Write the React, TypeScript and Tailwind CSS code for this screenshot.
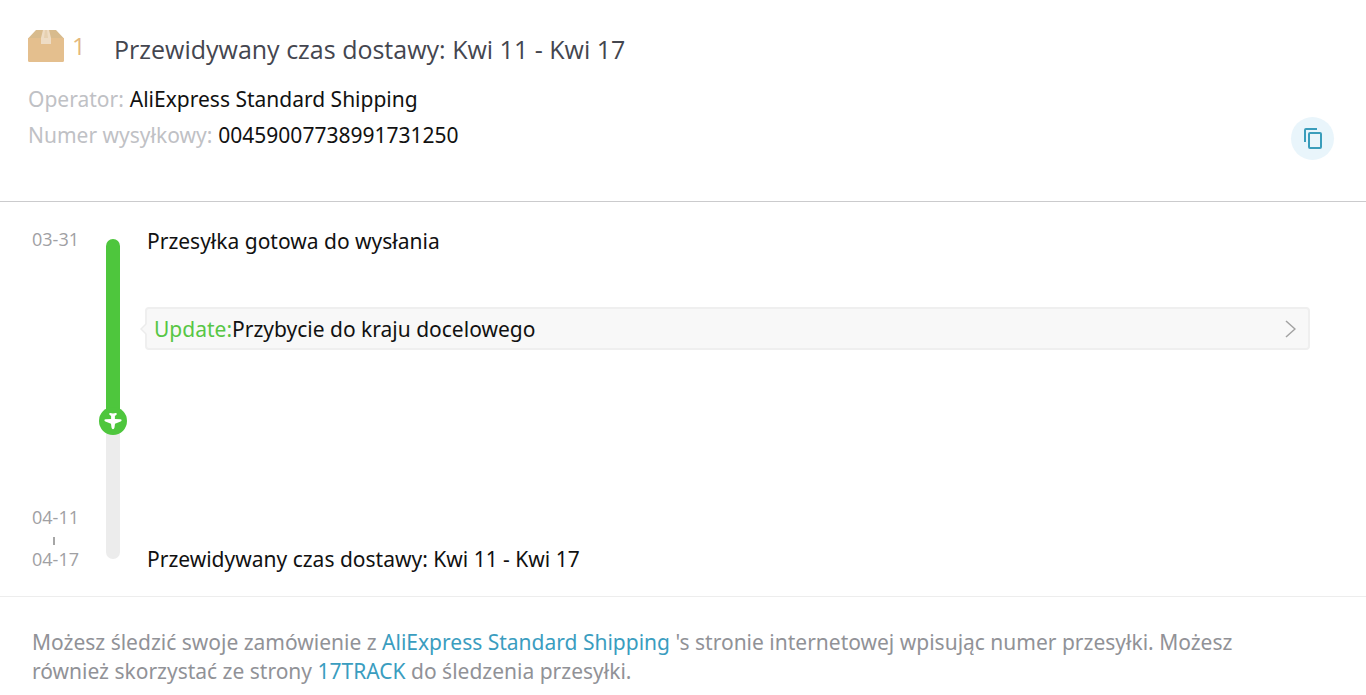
import type { ReactNode } from "react";

function PackageIcon() {
  return (
    <svg width="36" height="32" viewBox="0 0 36 32" aria-hidden="true">
      <path d="M8 0h20l8 8.500H0z" fill="#d8bb8d" />
      <path d="M0 8h36v22.500a1.500 1.500 0 0 1-1.500 1.500h-33a1.500 1.500 0 0 1-1.500-1.500z" fill="#e4bf8e" />
      <path d="M15 0h6l2 8v6H13V8z" fill="#eedcc4" />
      <path d="M17 0h2l1 8h-4z" fill="#e6d0b0" />
    </svg>
  );
}

function CopyIcon() {
  return (
    <svg width="18" height="21" viewBox="0 0 18 21" fill="none" stroke="#3a9dbb" strokeWidth="2" aria-hidden="true">
      <path d="M1 14V2a1 1 0 0 1 1-1h11" />
      <rect x="5" y="5" width="12" height="15" rx="1" />
    </svg>
  );
}

function PlaneIcon() {
  return (
    <svg width="18" height="18" viewBox="0 0 18 18" fill="#fff" aria-hidden="true">
      <path d="M5.200 1.800Q5.300.9 6.300 1L9 1.600 11.700 1Q12.700.9 12.800 1.800 12.800 2.600 12.200 3L10.900 4V7L16.500 7.300Q17.600 7.500 17.600 8.300 17.600 9.200 16.600 9.500L11 11.700 10.500 15.600Q10.200 17.300 9 17.300 7.800 17.300 7.500 15.600L7 11.700 1.400 9.500Q.4 9.200.4 8.300.4 7.500 1.500 7.300L7.100 7V4L5.800 3Q5.200 2.600 5.200 1.800z" />
    </svg>
  );
}

function Detail({ label, children }: { label: string; children: ReactNode }) {
  return (
    <div className="flex gap-1.5">
      <dt className="text-[#bfc1c5]">{label}</dt>
      <dd>{children}</dd>
    </div>
  );
}

export default function App() {
  return (
    <main className="bg-white font-['Noto_Sans',sans-serif] text-[21px] leading-9 text-[#111]">
      <header className="border-b border-[#cbcbcd] px-7 pt-7 pb-12">
        <div className="flex items-start font-['Open_Sans',sans-serif]">
          <div className="flex w-[86px] items-start gap-2 pt-0.5 text-[#e4b87c]">
            <PackageIcon />
            <span className="text-2xl/8">1</span>
          </div>
          <h1 className="pt-[3px] text-[25px] text-[#44464f]">Przewidywany czas dostawy: Kwi 11 - Kwi 17</h1>
        </div>
        <div className="mt-3.5 flex items-end justify-between pr-1">
          <dl>
            <Detail label="Operator:">AliExpress Standard Shipping</Detail>
            <Detail label="Numer wysyłkowy:">00459007738991731250</Detail>
          </dl>
          <button
            type="button"
            aria-label="Kopiuj numer"
            className="-mb-[7px] flex size-[43px] items-center justify-center rounded-full bg-[#e9f5fb]"
          >
            <CopyIcon />
          </button>
        </div>
      </header>

      <section className="flex border-b border-[#ededed] py-[37px] pr-14 pl-8">
        <div className="-my-2.5 flex w-[67px] flex-col justify-between font-['Open_Sans',sans-serif] text-lg/5 text-[#a0a0a3]">
          <time>03-31</time>
          <div className="flex flex-col">
            <time>04-11</time>
            <span className="mt-2.5 mb-1 ml-[21px] h-2 w-0.5 bg-[#a6a6a6]" />
            <time>04-17</time>
          </div>
        </div>
        <div className="flex w-7 flex-col items-center">
          <div className="h-[170px] w-3.5 rounded-t-full bg-[#4ec63d]" />
          <div className="z-10 -my-0.5 flex size-7 items-center justify-center rounded-full bg-[#4ec63d]">
            <PlaneIcon />
          </div>
          <div className="h-[126px] w-3.5 rounded-b-full bg-[#ececec]" />
        </div>
        <div className="-mt-4 -mb-[18px] ml-5 flex min-w-0 flex-1 flex-col">
          <p>Przesyłka gotowa do wysłania</p>
          <a
            href="#update"
            className="relative mt-12 -ml-0.5 flex h-[43px] items-center justify-between rounded-sm border-2 border-[#efefef] bg-[#f8f8f8] pr-3 pl-[7px]"
          >
            <svg className="absolute top-3.5 -left-[7px]" width="8" height="12" viewBox="0 0 8 12" aria-hidden="true">
              <path d="M8 0L1 6l7 6z" fill="#f8f8f8" />
              <path d="M6 1L1 6l5 5" fill="none" stroke="#ececec" strokeWidth="1.500" />
            </svg>
            <span>
              <span className="text-[#57c644]">Update:</span>Przybycie do kraju docelowego
            </span>
            <svg width="11" height="18" viewBox="0 0 11 18" fill="none" stroke="#a2a2a2" strokeWidth="1.500" aria-hidden="true">
              <path d="M1 1l9 8-9 8" />
            </svg>
          </a>
          <p className="mt-auto">Przewidywany czas dostawy: Kwi 11 - Kwi 17</p>
        </div>
      </section>

      <footer className="py-[31px] pr-20 pl-8 leading-[29px] text-[#919297]">
        Możesz śledzić swoje zamówienie z{" "}
        <a href="#aliexpress" className="text-[#3a9dbf]">AliExpress Standard Shipping</a> 's stronie internetowej wpisując numer
        przesyłki. Możesz również skorzystać ze strony{" "}
        <a href="#17track" className="text-[#3a9dbf]">17TRACK</a> do śledzenia przesyłki.
      </footer>
    </main>
  );
}
